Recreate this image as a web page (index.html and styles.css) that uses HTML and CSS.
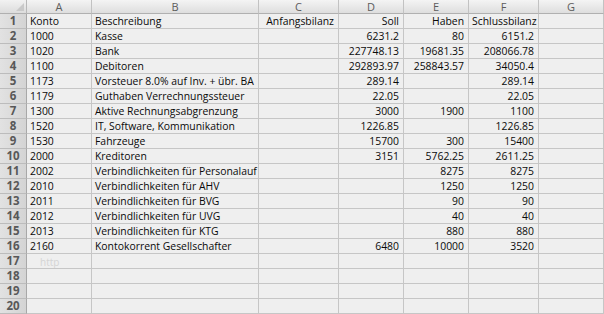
FILE: index.html
```html
<!DOCTYPE html>
<html>
<head>
<meta charset="utf-8">
<link rel="stylesheet" href="styles.css">
</head>
<body>
<div class="sheet">
  <div class="corner"><span class="tri"></span></div>
  <div class="ch">A</div><div class="ch">B</div><div class="ch">C</div><div class="ch">D</div><div class="ch">E</div><div class="ch">F</div><div class="ch">G</div><div class="ch end"></div>

  <div class="rh">1</div><div class="c">Konto</div><div class="c">Beschreibung</div><div class="c r">Anfangsbilanz</div><div class="c r">Soll</div><div class="c r">Haben</div><div class="c r">Schlussbilanz</div><div class="c"></div><div class="c end"></div>
  <div class="rh">2</div><div class="c">1000</div><div class="c">Kasse</div><div class="c"></div><div class="c r">6231.2</div><div class="c r">80</div><div class="c r">6151.2</div><div class="c"></div><div class="c end"></div>
  <div class="rh">3</div><div class="c">1020</div><div class="c">Bank</div><div class="c"></div><div class="c r">227748.13</div><div class="c r">19681.35</div><div class="c r">208066.78</div><div class="c"></div><div class="c end"></div>
  <div class="rh">4</div><div class="c">1100</div><div class="c">Debitoren</div><div class="c"></div><div class="c r">292893.97</div><div class="c r">258843.57</div><div class="c r">34050.4</div><div class="c"></div><div class="c end"></div>
  <div class="rh">5</div><div class="c">1173</div><div class="c">Vorsteuer 8.0% auf Inv. + übr. BA</div><div class="c"></div><div class="c r">289.14</div><div class="c r"></div><div class="c r">289.14</div><div class="c"></div><div class="c end"></div>
  <div class="rh">6</div><div class="c">1179</div><div class="c">Guthaben Verrechnungssteuer</div><div class="c"></div><div class="c r">22.05</div><div class="c r"></div><div class="c r">22.05</div><div class="c"></div><div class="c end"></div>
  <div class="rh">7</div><div class="c">1300</div><div class="c">Aktive Rechnungsabgrenzung</div><div class="c"></div><div class="c r">3000</div><div class="c r">1900</div><div class="c r">1100</div><div class="c"></div><div class="c end"></div>
  <div class="rh">8</div><div class="c">1520</div><div class="c">IT, Software, Kommunikation</div><div class="c"></div><div class="c r">1226.85</div><div class="c r"></div><div class="c r">1226.85</div><div class="c"></div><div class="c end"></div>
  <div class="rh">9</div><div class="c">1530</div><div class="c">Fahrzeuge</div><div class="c"></div><div class="c r">15700</div><div class="c r">300</div><div class="c r">15400</div><div class="c"></div><div class="c end"></div>
  <div class="rh">10</div><div class="c">2000</div><div class="c">Kreditoren</div><div class="c"></div><div class="c r">3151</div><div class="c r">5762.25</div><div class="c r">2611.25</div><div class="c"></div><div class="c end"></div>
  <div class="rh">11</div><div class="c">2002</div><div class="c">Verbindlichkeiten für Personalauf</div><div class="c"></div><div class="c r"></div><div class="c r">8275</div><div class="c r">8275</div><div class="c"></div><div class="c end"></div>
  <div class="rh">12</div><div class="c">2010</div><div class="c">Verbindlichkeiten für AHV</div><div class="c"></div><div class="c r"></div><div class="c r">1250</div><div class="c r">1250</div><div class="c"></div><div class="c end"></div>
  <div class="rh">13</div><div class="c">2011</div><div class="c">Verbindlichkeiten für BVG</div><div class="c"></div><div class="c r"></div><div class="c r">90</div><div class="c r">90</div><div class="c"></div><div class="c end"></div>
  <div class="rh">14</div><div class="c">2012</div><div class="c">Verbindlichkeiten für UVG</div><div class="c"></div><div class="c r"></div><div class="c r">40</div><div class="c r">40</div><div class="c"></div><div class="c end"></div>
  <div class="rh">15</div><div class="c">2013</div><div class="c">Verbindlichkeiten für KTG</div><div class="c"></div><div class="c r"></div><div class="c r">880</div><div class="c r">880</div><div class="c"></div><div class="c end"></div>
  <div class="rh">16</div><div class="c">2160</div><div class="c">Kontokorrent Gesellschafter</div><div class="c"></div><div class="c r">6480</div><div class="c r">10000</div><div class="c r">3520</div><div class="c"></div><div class="c end"></div>
  <div class="rh">17</div><div class="c"><span class="ghost">http</span></div><div class="c"></div><div class="c"></div><div class="c"></div><div class="c"></div><div class="c"></div><div class="c"></div><div class="c end"></div>
  <div class="rh">18</div><div class="c"></div><div class="c"></div><div class="c"></div><div class="c"></div><div class="c"></div><div class="c"></div><div class="c"></div><div class="c end"></div>
  <div class="rh">19</div><div class="c"></div><div class="c"></div><div class="c"></div><div class="c"></div><div class="c"></div><div class="c"></div><div class="c"></div><div class="c end"></div>
  <div class="rh">20</div><div class="c"></div><div class="c"></div><div class="c"></div><div class="c"></div><div class="c"></div><div class="c"></div><div class="c"></div><div class="c end"></div>
</div>
</body>
</html>
```
FILE: styles.css
```css
html, body {
  margin: 0;
  padding: 0;
  background: #efefef;
  overflow: hidden;
}
.sheet {
  display: grid;
  grid-template-columns: 27px 65px 167px 80px 65px 65px 70px 65px 20px;
  grid-template-rows: 14px repeat(20, 15px);
  font-family: "Open Sans", "Liberation Sans", sans-serif;
  font-size: 10.4px;
  color: #0a0a0a;
  width: 604px;
}
.sheet > div {
  box-sizing: border-box;
  border-right: 1px solid #c6c6c6;
  border-bottom: 1px solid #c6c6c6;
  white-space: nowrap;
  overflow: hidden;
}
.corner {
  position: relative;
  background: linear-gradient(#f2f2f2, #dcdcdc);
  border-right-color: #b8b8b8 !important;
  border-bottom-color: #b0b0b0 !important;
}
.tri {
  position: absolute;
  right: 2px;
  bottom: 2px;
  width: 0;
  height: 0;
  border-left: 8px solid transparent;
  border-bottom: 8px solid #c9c9c9;
}
.ch {
  background: linear-gradient(#f4f4f4, #dedede);
  border-bottom-color: #b0b0b0 !important;
  border-right-color: #c2c2c2 !important;
  text-align: center;
  color: #5c5c5c;
  font-size: 11px;
  line-height: 13px;
}
.rh {
  background: linear-gradient(90deg, #e2e2e2, #d4d4d4);
  border-right-color: #a8a8a8 !important;
  border-bottom-color: #bcbcbc !important;
  text-align: center;
  color: #585858;
  font-weight: bold;
  font-size: 11.5px;
  line-height: 14px;
}
.c {
  padding: 0 4px 0 3px;
  line-height: 14px;
  position: relative;
}
.r {
  text-align: right;
}
.ghost {
  position: absolute;
  left: 13px;
  top: 1px;
  color: #d4d4d4;
  font-size: 10px;
}
```
